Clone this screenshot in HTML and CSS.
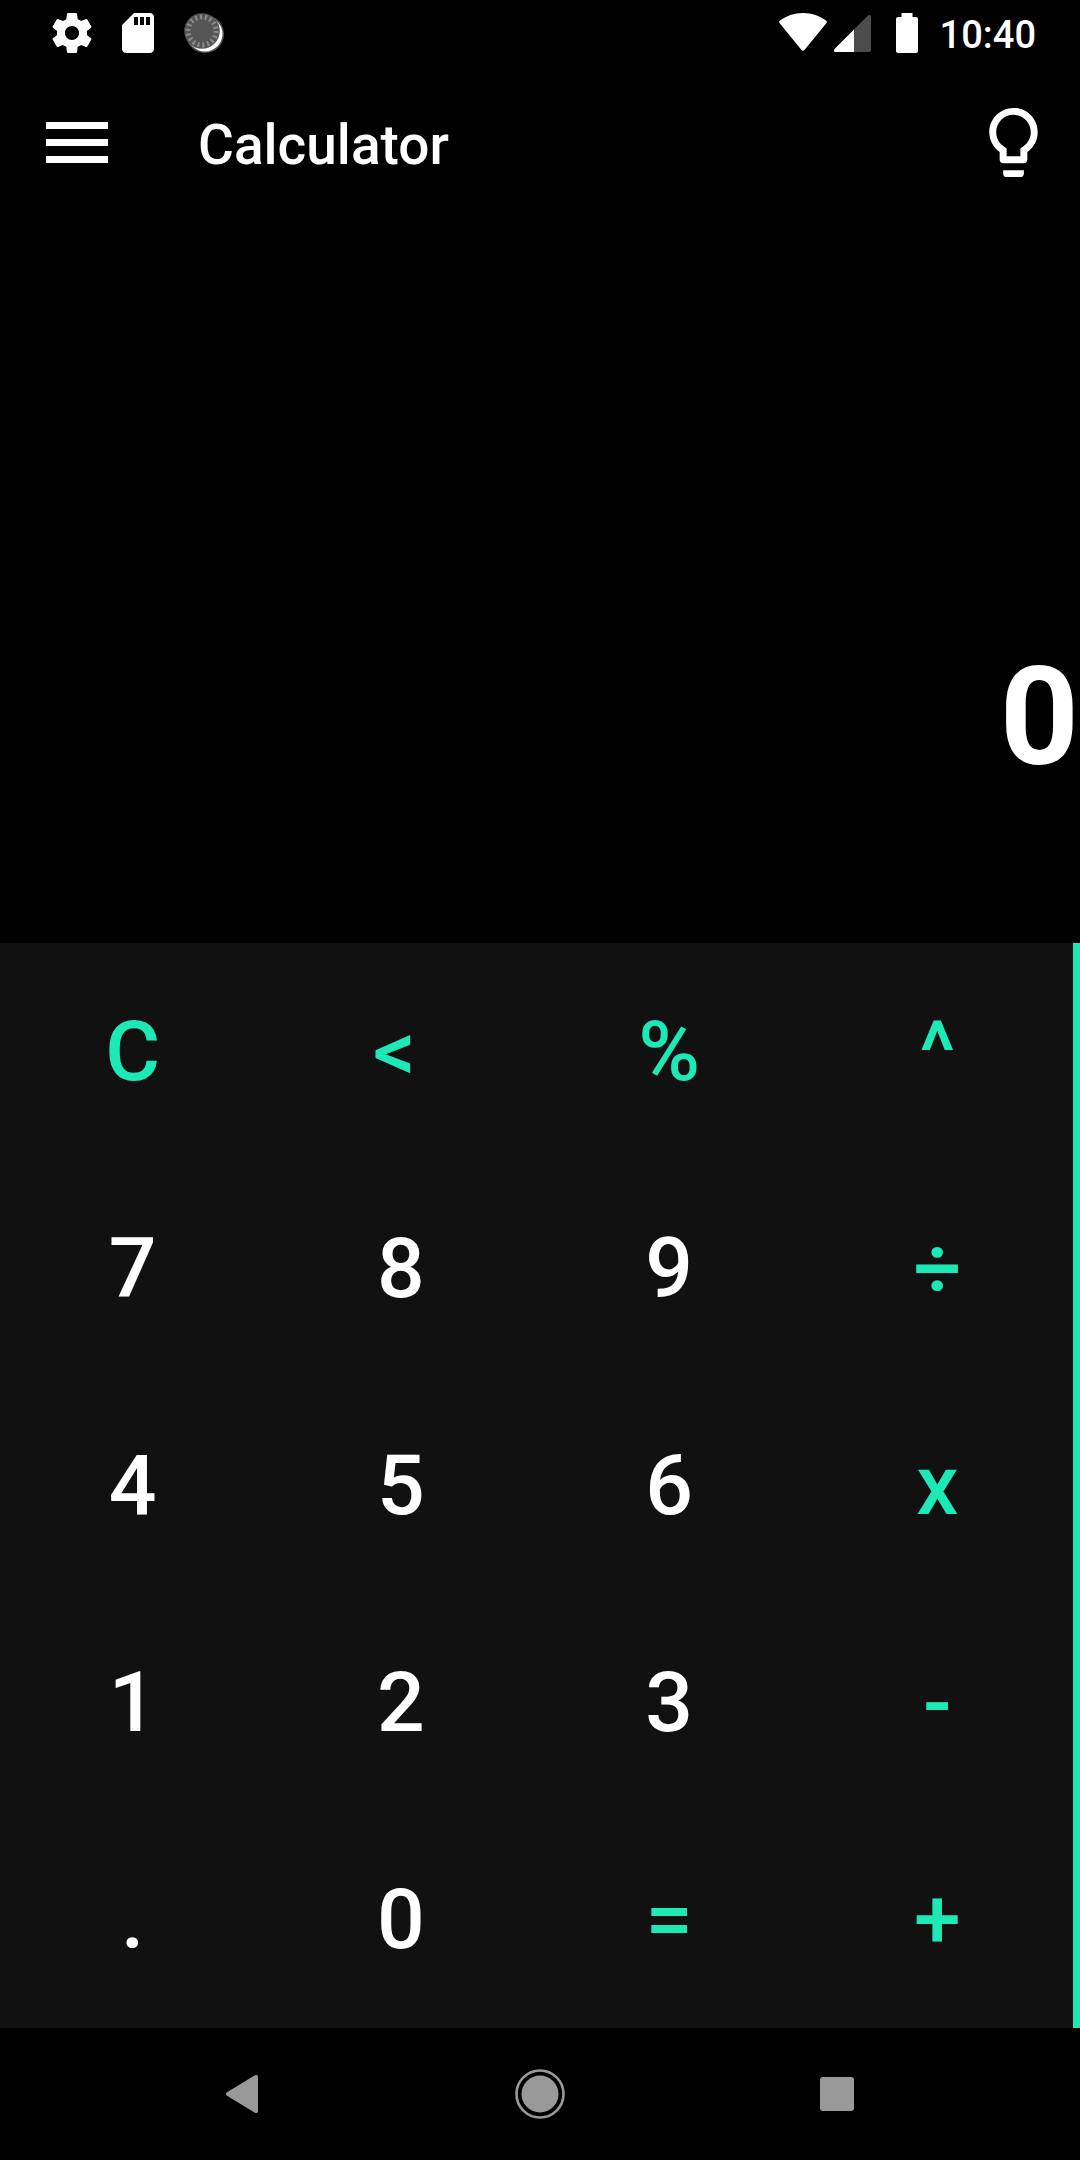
FILE: index.html
```html
<!DOCTYPE html>
<html lang="en">
<head>
<meta charset="utf-8">
<meta name="viewport" content="width=device-width, initial-scale=1">
<title>Calculator</title>
<link rel="stylesheet" href="styles.css">
</head>
<body>
<div class="screen">
  <div class="status">
    <div class="status-notes">
      <svg width="48" height="48" viewBox="0 0 24 24" fill="#fff"><path d="M19.43 12.98c.04-.32.07-.64.07-.98s-.03-.66-.07-.98l2.11-1.65c.19-.15.24-.42.12-.64l-2-3.46c-.12-.22-.39-.3-.61-.22l-2.49 1c-.52-.4-1.08-.73-1.69-.98l-.38-2.65C14.46 2.18 14.25 2 14 2h-4c-.25 0-.46.18-.49.42l-.38 2.65c-.61.25-1.17.59-1.69.98l-2.49-1c-.23-.09-.49 0-.61.22l-2 3.46c-.13.22-.07.49.12.64l2.11 1.65c-.04.32-.07.65-.07.98s.03.66.07.98l-2.11 1.65c-.19.15-.24.42-.12.64l2 3.46c.12.22.39.3.61.22l2.49-1c.52.4 1.08.73 1.69.98l.38 2.65c.03.24.24.42.49.42h4c.25 0 .46-.18.49-.42l.38-2.65c.61-.25 1.17-.59 1.69-.98l2.49 1c.23.09.49 0 .61-.22l2-3.46c.12-.22.07-.49-.12-.64l-2.11-1.65zM12 15.5c-1.93 0-3.5-1.57-3.5-3.5s1.57-3.5 3.5-3.5 3.5 1.57 3.5 3.5-1.57 3.5-3.5 3.5z"/></svg>
      <svg width="48" height="48" viewBox="0 0 24 24" fill="#fff"><path fill-rule="evenodd" d="M18 2h-8L4 8v12c0 1.100.9 2 2 2h12c1.100 0 2-.9 2-2V4c0-1.100-.9-2-2-2zM10 4h2v4h-2zM13 4h2v4h-2zM16 4h2v4h-2z"/></svg>
      <svg width="48" height="48" viewBox="0 0 48 48">
        <circle cx="25" cy="25" r="19" fill="#555"/>
        <circle cx="25" cy="25" r="17.500" fill="#fff"/>
        <circle cx="22" cy="22" r="17.800" fill="#555"/>
        <circle cx="22" cy="22" r="14" fill="none" stroke="#8c8c8c" stroke-width="5" stroke-dasharray="2 2.887"/>
      </svg>
    </div>
    <div class="status-system">
      <svg width="48" height="40" viewBox="0 0 48 40" fill="#fff"><path d="M1 7.500C7 3 15 0 24 0s17 3 23 7.500c1 .8 1 1.700.5 2.500L25.500 37c-.9 1-2.100 1-3 0L.5 10C0 9.200 0 8.300 1 7.500z"/></svg>
      <svg class="signal" width="38" height="40" viewBox="0 0 38 40"><path d="M21 16.500 35 2.500c1.200-1.200 3-.5 3 1V37q0 2-2 2H21z" fill="#4d4d4d"/><path d="M21 16.500V39H2.500C.8 39 .3 37.200 1.500 36z" fill="#fff"/></svg>
      <svg class="battery" width="24" height="40" viewBox="0 0 24 40" fill="#fff"><path d="M6.500 0h11v4H21q2 0 2 2v32q0 2-2 2H3q-2 0-2-2V6q0-2 2-2h3.500z"/></svg>
      <time class="clock">10:40</time>
    </div>
  </div>

  <header class="appbar">
    <button class="icon-button" type="button" aria-label="Menu">
      <svg width="62" height="41" viewBox="0 0 62 41" fill="#fff"><path d="M0 0h62v7H0zM0 17h62v7H0zM0 34h62v7H0z"/></svg>
    </button>
    <h1 class="title">Calculator</h1>
    <button class="icon-button" type="button" aria-label="Toggle theme">
      <svg width="83" height="83" viewBox="0 0 24 24" fill="#fff"><path d="M9 21c0 .55.45 1 1 1h4c.55 0 1-.45 1-1v-1H9v1zm3-19C8.140 2 5 5.140 5 9c0 2.380 1.190 4.470 3 5.740V17c0 .55.45 1 1 1h6c.55 0 1-.45 1-1v-2.260c1.810-1.270 3-3.360 3-5.740 0-3.860-3.140-7-7-7zm2.850 11.100l-.85.6V16h-4v-2.300l-.85-.6C7.800 12.160 7 10.630 7 9c0-2.760 2.240-5 5-5s5 2.240 5 5c0 1.630-.8 3.160-2.150 4.100z"/></svg>
    </button>
  </header>

  <main class="calculator">
    <output class="display">0</output>
    <div class="keypad">
      <button class="key key-op" type="button">C</button>
      <button class="key key-op key-back" type="button">&lt;</button>
      <button class="key key-op" type="button">%</button>
      <button class="key key-op" type="button">^</button>
      <button class="key" type="button">7</button>
      <button class="key" type="button">8</button>
      <button class="key" type="button">9</button>
      <button class="key key-op" type="button">÷</button>
      <button class="key" type="button">4</button>
      <button class="key" type="button">5</button>
      <button class="key" type="button">6</button>
      <button class="key key-op" type="button">x</button>
      <button class="key" type="button">1</button>
      <button class="key" type="button">2</button>
      <button class="key" type="button">3</button>
      <button class="key key-op" type="button">-</button>
      <button class="key" type="button">.</button>
      <button class="key" type="button">0</button>
      <button class="key key-op" type="button">=</button>
      <button class="key key-op" type="button">+</button>
    </div>
  </main>

  <nav class="navbar" aria-label="System">
    <button class="icon-button nav-button" type="button" aria-label="Back">
      <svg width="52" height="52" viewBox="0 0 52 52" fill="#999"><path d="M10 24.200 37.500 7.500c2-1.200 3.500-.5 3.500 1.500v34c0 2-1.500 2.700-3.500 1.500L10 27.800c-1.600-1-1.600-2.600 0-3.600z"/></svg>
    </button>
    <button class="icon-button nav-button" type="button" aria-label="Home">
      <svg width="52" height="52" viewBox="0 0 52 52"><circle cx="26" cy="26" r="23.500" fill="none" stroke="#999" stroke-width="2.600"/><circle cx="26" cy="26" r="18.500" fill="#999"/></svg>
    </button>
    <button class="icon-button nav-button" type="button" aria-label="Recent apps">
      <svg width="52" height="52" viewBox="0 0 52 52" fill="#999"><rect x="9" y="9" width="34" height="34" rx="3"/></svg>
    </button>
  </nav>
</div>
</body>
</html>
```
FILE: styles.css
```css
* {
  box-sizing: border-box;
}

body {
  margin: 0;
  background: #000;
  color: #fff;
  font-family: Roboto, "Liberation Sans", sans-serif;
  font-weight: 500;
}

svg {
  display: block;
}

button {
  margin: 0;
  padding: 0;
  border: 0;
  background: none;
  color: inherit;
  font: inherit;
  cursor: pointer;
}

.screen {
  display: flex;
  flex-direction: column;
  min-height: 100vh;
}

.status {
  display: flex;
  align-items: center;
  justify-content: space-between;
  height: 66px;
  padding: 0 44px 0 48px;
}

.status-notes {
  display: flex;
  gap: 18px;
}

.status-system {
  display: flex;
  align-items: center;
}

.signal {
  margin-left: 6px;
}

.battery {
  margin-left: 24px;
}

.clock {
  margin-left: 21px;
  padding-top: 4px;
  font-size: 38px;
  line-height: 48px;
}

.appbar {
  display: flex;
  align-items: center;
  height: 153px;
  padding: 0 25px 0 46px;
}

.title {
  flex: 1;
  margin: 0 0 0 90px;
  padding-top: 4px;
  font-size: 55px;
  font-weight: 500;
  line-height: 64px;
}

.calculator {
  flex: 1;
  display: flex;
  flex-direction: column;
}

.display {
  flex: 1;
  display: flex;
  align-items: flex-end;
  justify-content: flex-end;
  padding: 0 1px 146px 0;
  font-size: 138px;
  font-weight: 700;
  line-height: 160px;
}

.keypad {
  display: grid;
  grid-template-columns: repeat(4, 1fr);
  grid-auto-rows: 217px;
  border-right: 7px solid #1de9b6;
  background: #111;
}

.key {
  padding-right: 3px;
  font-size: 84px;
}

.key-op {
  color: #1de9b6;
}

.key-back {
  padding-right: 16px;
}

.navbar {
  display: flex;
  align-items: center;
  justify-content: center;
  gap: 201px;
  height: 132px;
}

.nav-button {
  display: flex;
  justify-content: center;
  width: 96px;
}
```
